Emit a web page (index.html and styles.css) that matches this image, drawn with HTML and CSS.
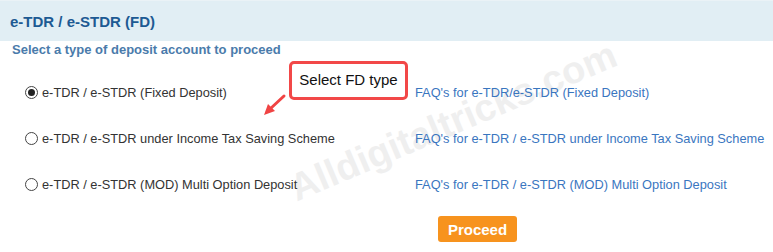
FILE: index.html
```html
<!DOCTYPE html>
<html>
<head>
<meta charset="utf-8">
<link rel="stylesheet" href="styles.css">
</head>
<body>
<div class="page">
  <div class="header">e-TDR / e-STDR (FD)</div>
  <div class="subtitle">Select a type of deposit account to proceed</div>
  <div class="options">
    <div class="opt"><span class="radio checked"></span>e-TDR / e-STDR (Fixed Deposit)</div>
    <a class="faq">FAQ's for e-TDR/e-STDR (Fixed Deposit)</a>
    <div class="opt"><span class="radio"></span>e-TDR / e-STDR under Income Tax Saving Scheme</div>
    <a class="faq">FAQ's for e-TDR / e-STDR under Income Tax Saving Scheme</a>
    <div class="opt"><span class="radio"></span>e-TDR / e-STDR (MOD) Multi Option Deposit</div>
    <a class="faq">FAQ's for e-TDR / e-STDR (MOD) Multi Option Deposit</a>
  </div>
  <div class="actions"><button class="proceed">Proceed</button></div>
  <div class="watermark">Alldigitaltricks.com</div>
  <div class="callout">Select FD type</div>
  <svg class="arrow" width="40" height="30" viewBox="0 0 40 30">
    <line x1="22" y1="3" x2="8" y2="16" stroke="#f04444" stroke-width="3" stroke-linecap="round"/>
    <polygon points="2,22 6,11 13,18" fill="#f04444"/>
  </svg>
</div>
</body>
</html>
```
FILE: styles.css
```css
* { box-sizing: border-box; }
body { margin: 0; background: #fff; font-family: "Liberation Sans", Arial, sans-serif; }
.page { position: relative; width: 773px; height: 252px; overflow: hidden; }
.header {
  height: 41px;
  background: #e1eef4;
  border-top: 1px solid #eaf2f6;
  padding-left: 10px;
  display: flex; align-items: center;
  font-size: 15px; font-weight: bold; color: #1d5a93;
}
.subtitle {
  padding: 1px 0 0 12px;
  font-size: 13px; font-weight: bold; color: #4a7bab;
  height: 17px;
}
.options {
  display: grid;
  grid-template-columns: 415px auto;
  grid-auto-rows: 46px;
  margin-top: 11px;
  position: relative; z-index: 2;
}
.opt {
  display: flex; align-items: center;
  padding-left: 25px;
  font-size: 12.8px; color: #333;
}
.faq { display: flex; align-items: center; font-size: 12.8px; color: #3a76bf; }
.radio {
  width: 13px; height: 13px; border: 1px solid #444; border-radius: 50%;
  margin-right: 4px; display: inline-flex; align-items: center; justify-content: center;
  background: #fff;
}
.radio.checked::after { content: ""; width: 7px; height: 7px; border-radius: 50%; background: #222; }
.actions { padding: 9px 0 0 438px; position: relative; z-index: 2; }
.proceed {
  width: 79px; height: 26px;
  background: #f7931e; border: none; border-radius: 3px;
  color: #fff; font-family: "Liberation Sans", Arial, sans-serif; font-size: 15px; font-weight: bold;
  padding: 0;
}
.watermark {
  position: absolute; left: 278px; top: 100px;
  transform: rotate(-23deg);
  font-size: 38px; font-weight: bold; color: #efefef;
  white-space: nowrap; z-index: 1;
}
.callout {
  position: absolute; left: 289px; top: 61px; width: 119px; height: 39px;
  border: 3px solid #f24848; border-radius: 5px; background: #fff;
  font-size: 15px; color: #111; display: flex; align-items: center; justify-content: center;
  padding-bottom: 3px;
  z-index: 3;
}
.arrow { position: absolute; left: 262px; top: 93px; z-index: 3; }
```
